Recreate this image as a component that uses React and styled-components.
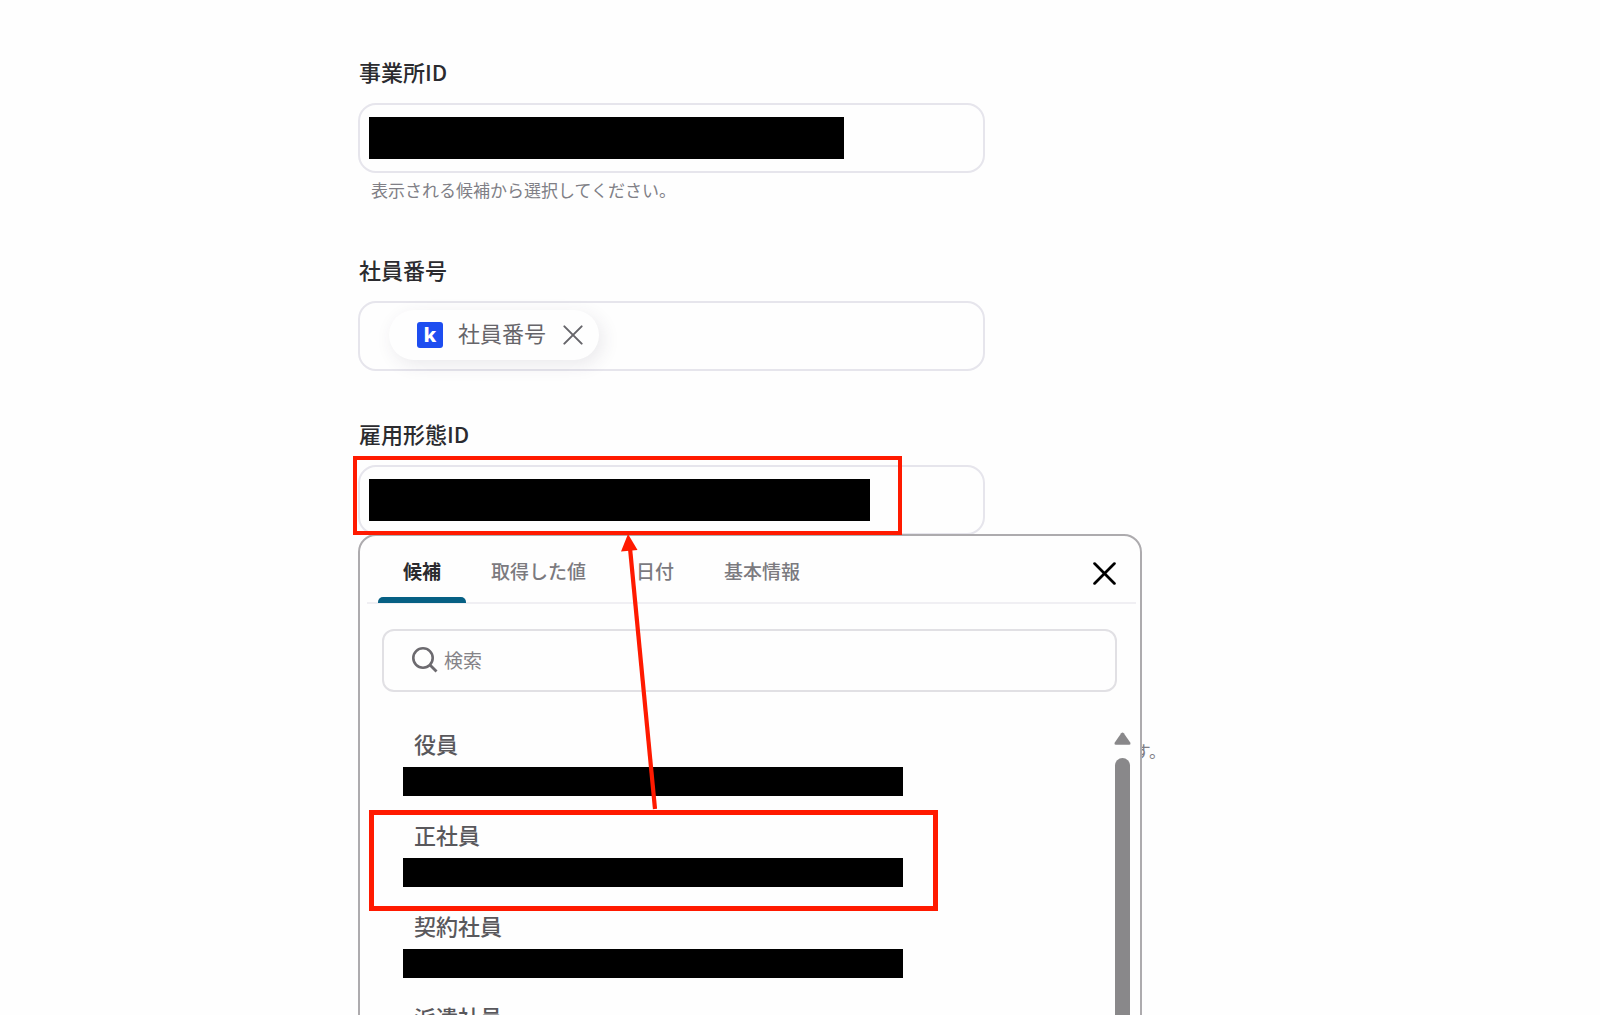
import React, { useState } from 'react';
import styled, { createGlobalStyle } from 'styled-components';

const GlobalStyle = createGlobalStyle`
  * {
    box-sizing: border-box;
  }
  body {
    margin: 0;
    background: #fefefe;
    color: #2b2b2f;
    font-family: "Noto Sans CJK JP", "Noto Sans", sans-serif;
  }
  button, input {
    font-family: inherit;
    border: 0;
    padding: 0;
    background: none;
    outline: none;
  }
  button {
    cursor: pointer;
  }
`;

const tabs = ['候補', '取得した値', '日付', '基本情報'];

const options = [
  { label: '役員' },
  { label: '正社員', marked: true },
  { label: '契約社員' },
  { label: '派遣社員' },
];

const CloseIcon = ({ size, weight }) => (
  <svg width={size} height={size} viewBox="0 0 22 22" aria-hidden="true">
    <path
      d="M1.5 1.5L20.5 20.5M20.5 1.5L1.5 20.5"
      fill="none"
      stroke="currentColor"
      strokeWidth={weight}
      strokeLinecap="round"
    />
  </svg>
);

const SearchIcon = () => (
  <svg width="26" height="28" viewBox="0 0 26 28" aria-hidden="true">
    <circle cx="11" cy="11" r="9.7" fill="none" stroke="#6c6a6f" strokeWidth="2.6" />
    <path d="M18 18L24.5 24.5" stroke="#6c6a6f" strokeWidth="2.8" />
  </svg>
);

const Picker = () => {
  const [active, setActive] = useState(tabs[0]);
  const [keyword, setKeyword] = useState('');

  return (
    <Popup role="dialog" aria-label="雇用形態ID">
      <TabBar role="tablist">
        {tabs.map((tab) => (
          <Tab
            key={tab}
            type="button"
            role="tab"
            aria-selected={tab === active}
            $active={tab === active}
            onClick={() => setActive(tab)}
          >
            {tab}
          </Tab>
        ))}
        <CloseButton type="button" aria-label="閉じる">
          <CloseIcon size={23} weight={2.6} />
        </CloseButton>
      </TabBar>
      <SearchBox>
        <SearchIcon />
        <SearchInput
          type="text"
          aria-label="検索"
          placeholder="検索"
          value={keyword}
          onChange={(e) => setKeyword(e.target.value)}
        />
      </SearchBox>
      <ListArea>
        <OptionList>
          {options.map(({ label, marked }) => (
            <Option key={label}>
              <OptionButton type="button">
                {label}
                <OptionMask />
              </OptionButton>
              {marked && <OptionFrame />}
            </Option>
          ))}
        </OptionList>
        <Scrollbar>
          <svg width="17" height="13" viewBox="0 0 17 13" aria-hidden="true">
            <path
              d="M7.2 1.2Q8.5 0 9.8 1.2L16.4 10.8Q17 12.6 15.4 12.8H1.6Q0 12.6 0.6 10.8Z"
              fill="#89888a"
            />
          </svg>
          <Thumb />
        </Scrollbar>
      </ListArea>
    </Popup>
  );
};

const App = () => (
  <>
    <GlobalStyle />
    <Page>
      <Form onSubmit={(e) => e.preventDefault()}>
        <Field>
          <Label htmlFor="office">事業所ID</Label>
          <Control>
            <Mask $width={475} />
            <TextInput id="office" type="text" />
          </Control>
          <Helper>表示される候補から選択してください。</Helper>
        </Field>

        <Field>
          <Label htmlFor="number">社員番号</Label>
          <Control>
            <Chip>
              <Logo>k</Logo>
              <ChipText>社員番号</ChipText>
              <ChipRemove type="button" aria-label="削除">
                <CloseIcon size={20} weight={2.2} />
              </ChipRemove>
            </Chip>
            <TextInput id="number" type="text" />
          </Control>
        </Field>

        <Field>
          <Label htmlFor="employment">雇用形態ID</Label>
          <Anchor>
            <Control>
              <Mask $width={501} />
              <TextInput id="employment" type="text" />
            </Control>
            <Picker />
            <ControlFrame />
            <Arrow width="40" height="276" viewBox="0 0 40 276" aria-hidden="true">
              <path d="M10 14L35 275" stroke="#ff1a00" strokeWidth="4.2" />
              <path d="M8 0L17.5 16L1 17.5Z" fill="#ff1a00" />
            </Arrow>
          </Anchor>
          <TrailingHelper>す。</TrailingHelper>
        </Field>
      </Form>
    </Page>
  </>
);

const Page = styled.main`
  height: 100vh;
  overflow: hidden;
  padding: 58px 24px 0;
`;

const Form = styled.form`
  display: flex;
  flex-direction: column;
  gap: 49px;
  max-width: 884px;
  margin: 0 auto;
`;

const Field = styled.div`
  display: flex;
  flex-direction: column;
`;

const Label = styled.label`
  margin-bottom: 19px;
  padding-left: 1px;
  font-size: 22px;
  font-weight: 500;
  line-height: 26px;
`;

const Control = styled.div`
  display: flex;
  align-items: center;
  width: 100%;
  max-width: 627px;
  height: 70px;
  padding: 0 9px;
  border: 2px solid #e6e5ec;
  border-radius: 18px;
`;

const Mask = styled.span`
  flex: 0 1 ${({ $width }) => $width}px;
  height: 42px;
  background: #000;
`;

const TextInput = styled.input`
  flex: 1;
  min-width: 0;
  height: 42px;
  font-size: 22px;
`;

const Helper = styled.p`
  margin: 5px 0 0;
  padding: 0 0 5px 13px;
  color: #807f86;
  font-size: 17px;
  line-height: 24px;
`;

const TrailingHelper = styled(Helper)`
  max-width: 808px;
  margin-top: 204px;
  text-align: right;
`;

const Chip = styled.span`
  display: flex;
  align-items: center;
  height: 50px;
  margin: 0 0 2px 20px;
  padding: 0 16px 0 28px;
  border-radius: 25px;
  background: #fefefe;
  box-shadow: 4px 5px 18px rgba(60, 50, 80, 0.1);
`;

const ChipText = styled.span`
  padding-bottom: 7px;
  color: #66656a;
  font-size: 22px;
  line-height: 28px;
`;

const Logo = styled.span`
  width: 26px;
  height: 26px;
  margin-right: 15px;
  border-radius: 3px;
  background: #1d4df0;
  color: #fff;
  font-family: "Noto Sans", sans-serif;
  font-size: 20px;
  font-weight: 800;
  line-height: 25px;
  text-align: center;
`;

const ChipRemove = styled.button`
  display: flex;
  margin-left: 17px;
  color: #66656a;
`;

const Anchor = styled.div`
  position: relative;
`;

const Frame = styled.span`
  position: absolute;
  z-index: 2;
  border: 4px solid #ff1a00;
  pointer-events: none;
`;

const ControlFrame = styled(Frame)`
  top: -9px;
  left: -5px;
  width: 549px;
  height: 79px;
`;

const OptionFrame = styled(Frame)`
  top: -10px;
  left: 9px;
  width: 569px;
  height: 101px;
  border-width: 5px;
`;

const Arrow = styled.svg`
  position: absolute;
  top: 69px;
  left: 262px;
  z-index: 3;
  pointer-events: none;
`;

const Popup = styled.section`
  position: absolute;
  top: 69px;
  left: 0;
  z-index: 1;
  display: flex;
  flex-direction: column;
  width: 784px;
  height: 600px;
  border: 2px solid #adabae;
  border-radius: 18px;
  background: #fefefe;
`;

const TabBar = styled.div`
  display: flex;
  align-items: stretch;
  height: 68px;
  margin: 0 4px 0 7px;
  padding: 0 14px 0 11px;
  border-bottom: 2px solid #f0eff3;
`;

const Tab = styled.button`
  position: relative;
  padding: 4px 25px 0;
  color: ${({ $active }) => ($active ? '#2b2b2f' : '#7b7a7f')};
  font-size: 19px;
  font-weight: ${({ $active }) => ($active ? 700 : 500)};
  line-height: 26px;

  &::after {
    content: '';
    position: absolute;
    right: 0;
    bottom: -1px;
    left: 0;
    height: 6px;
    border-radius: 5px 5px 0 0;
    background: ${({ $active }) => ($active ? '#066084' : 'transparent')};
  }
`;

const CloseButton = styled.button`
  display: flex;
  align-items: center;
  margin-left: auto;
  padding: 8px 6px 0 0;
  color: #000;
`;

const SearchBox = styled.div`
  display: flex;
  align-items: center;
  gap: 6px;
  height: 63px;
  margin: 25px 23px 0 22px;
  padding: 0 28px;
  border: 2px solid #e1e0e4;
  border-radius: 12px;
`;

const SearchInput = styled.input`
  flex: 1;
  min-width: 0;
  height: 30px;
  padding-bottom: 2px;
  color: #2b2b2f;
  font-size: 19px;

  &::placeholder {
    color: #858388;
    opacity: 1;
  }
`;

const ListArea = styled.div`
  display: flex;
  flex: 1;
  margin-top: 37px;
`;

const OptionList = styled.ul`
  flex: 1;
  margin: 0;
  padding: 0;
  list-style: none;
`;

const Option = styled.li`
  position: relative;
  height: 91px;
`;

const OptionButton = styled.button`
  display: block;
  width: 100%;
  padding: 0 43px 0 54px;
  color: #59585c;
  font-size: 22px;
  font-weight: 500;
  line-height: 28px;
  text-align: left;
`;

const OptionMask = styled.span`
  display: block;
  width: 500px;
  height: 29px;
  margin: 10px 0 0 -11px;
  background: #000;
`;

const Scrollbar = styled.div`
  display: flex;
  flex-direction: column;
  align-items: center;
  gap: 13px;
  width: 17px;
  margin-right: 9px;
  padding-top: 3px;
`;

const Thumb = styled.span`
  flex: 1;
  width: 15px;
  border-radius: 8px;
  background: #89888a;
`;

export default App;
